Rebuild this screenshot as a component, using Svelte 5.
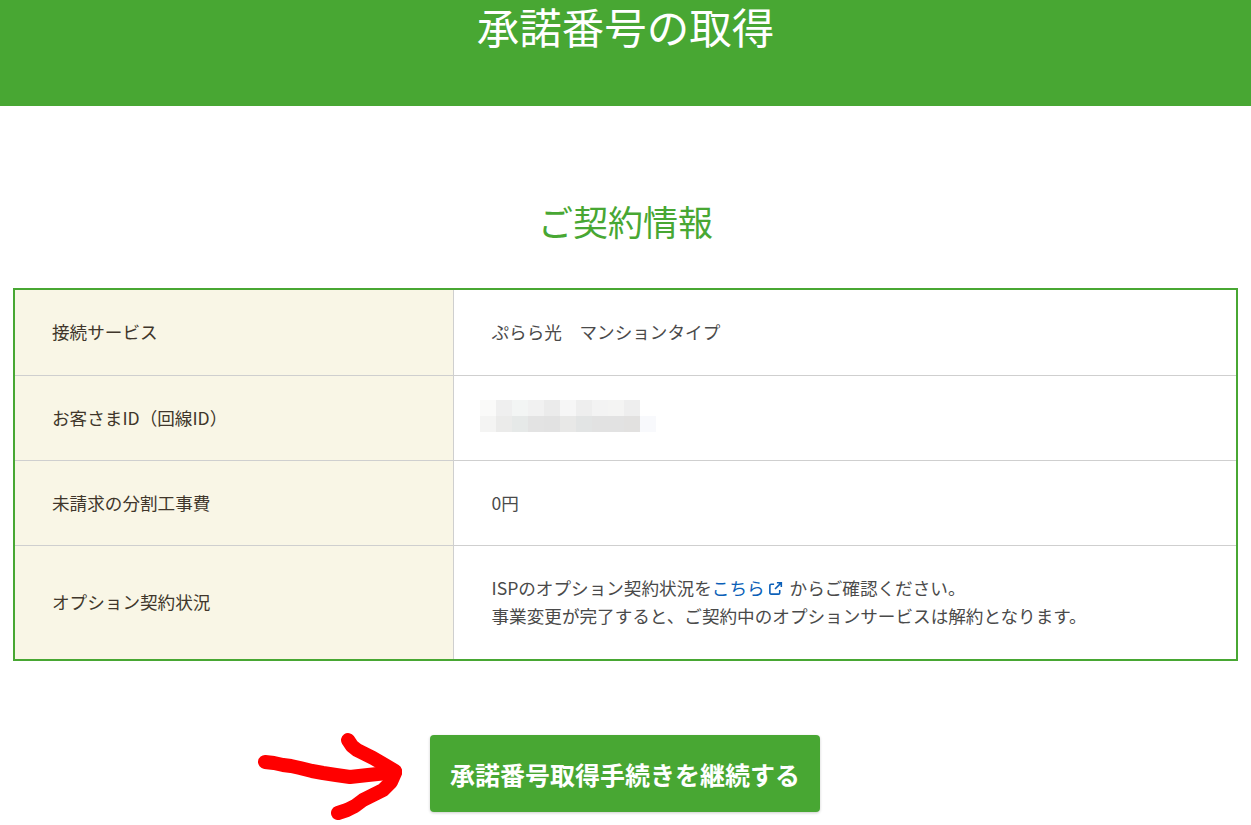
<script>
  const mosaic = [
    '#fafaf9', '#efefef', '#f3f5f4', '#f1f1f1', '#ebebeb', '#f6f6f6', '#eeeeee', '#f3f3f3', '#f4f4f3', '#eeeeee', '#ffffff',
    '#f4f4f3', '#ebebea', '#e6e9e8', '#e3e3e3', '#e2e2e2', '#e8e8e7', '#e2e4e4', '#e2e2e2', '#e2e2e2', '#e2e1e0', '#f8f9fc'
  ];
</script>

<div class="page">
  <header>
    <h1>承諾番号の取得</h1>
  </header>

  <h2>ご契約情報</h2>

  <table>
    <tbody>
      <tr class="r1">
        <th>接続サービス</th>
        <td>ぷらら光　マンションタイプ</td>
      </tr>
      <tr class="r2">
        <th>お客さまID（回線ID）</th>
        <td>
          <div class="mosaic">
            {#each mosaic as c}
              <span style="background: {c}"></span>
            {/each}
          </div>
        </td>
      </tr>
      <tr class="r2">
        <th>未請求の分割工事費</th>
        <td>0円</td>
      </tr>
      <tr class="r4">
        <th>オプション契約状況</th>
        <td>
          ISPのオプション契約状況を<a href="/">こちら<svg viewBox="0 0 16 16" width="15" height="15" fill="none" stroke="currentColor" stroke-width="1.7"><path d="M12.5 9.5v3.2a1.3 1.3 0 0 1-1.3 1.3H3.3A1.3 1.3 0 0 1 2 12.7V4.8a1.3 1.3 0 0 1 1.3-1.3h3.2" /><path d="M9.5 1.8h4.7v4.7M14 2 7.5 8.5" /></svg></a> からご確認ください。<br />
          事業変更が完了すると、ご契約中のオプションサービスは解約となります。
        </td>
      </tr>
    </tbody>
  </table>

  <div class="actions">
    <svg class="arrow" viewBox="0 0 160 90" width="160" height="90" fill="none" stroke="#ff0000" stroke-width="14" stroke-linecap="round" stroke-linejoin="round">
      <path d="M7 32 L16 33 L25 35 L33 36 L42 38 L54 41 L65 43 L78 45 L92 47 L110 45 L129 43 L137 42" />
      <path d="M90 10 L94 16 L99 20 L107 24 L115 28 L127 35 L137 41" />
      <path d="M137 43 L133 52 L125 60 L115 65 L105 70 L97 76 L89 80 L80 83" />
    </svg>
    <button type="button">承諾番号取得手続きを継続する</button>
  </div>
</div>

<style>
  :global(body) {
    margin: 0;
    background: #fff;
  }

  .page {
    height: 825px;
    overflow: hidden;
    font-family: "Noto Sans CJK JP", "Noto Sans", sans-serif;
    color: #4a4a4a;
  }

  header {
    height: 106px;
    background: #48a733;
    text-align: center;
  }

  h1 {
    margin: 0;
    font-size: 42.5px;
    line-height: 52px;
    font-weight: 400;
    color: #fff;
  }

  h2 {
    margin: 89px 0 41px;
    text-align: center;
    font-size: 35px;
    line-height: 52px;
    font-weight: 400;
    color: #48a733;
  }

  table {
    width: 1225px;
    margin: 0 0 0 13px;
    border-collapse: collapse;
    border: 2px solid #48a733;
    box-sizing: border-box;
    font-size: 17.6px;
  }

  th, td {
    padding: 0 38px;
    border-bottom: 1px solid #cfcfcf;
    text-align: left;
    font-weight: 400;
    line-height: 28px;
  }

  tr:last-child th, tr:last-child td {
    border-bottom: 0;
  }

  th {
    width: 439px;
    box-sizing: border-box;
    background: #f9f6e6;
    border-right: 1px solid #cfcfcf;
    color: #40362b;
    padding-left: 37px;
  }

  .r1 { height: 86px; }
  .r2 { height: 85px; }
  .r4 { height: 115px; }

  .mosaic {
    display: grid;
    grid-template-columns: repeat(11, 16px);
    grid-auto-rows: 16px;
    margin: -2px 0 2px -12px;
  }

  a {
    color: #0b5fb8;
    text-decoration: none;
  }

  a svg {
    margin: 0 3px 0 3px;
    vertical-align: -1px;
  }

  .actions {
    position: relative;
    display: flex;
    justify-content: flex-start;
    margin: 74px 0 0 430px;
  }

  button {
    width: 390px;
    height: 77px;
    border: 0;
    border-radius: 4px;
    background: #48a733;
    box-shadow: 0 1px 3px rgba(0, 0, 0, 0.2);
    color: #fff;
    font-family: inherit;
    font-size: 25px;
    font-weight: 700;
    padding: 0;
  }

  .arrow {
    position: absolute;
    left: -172px;
    top: -5px;
  }
</style>
